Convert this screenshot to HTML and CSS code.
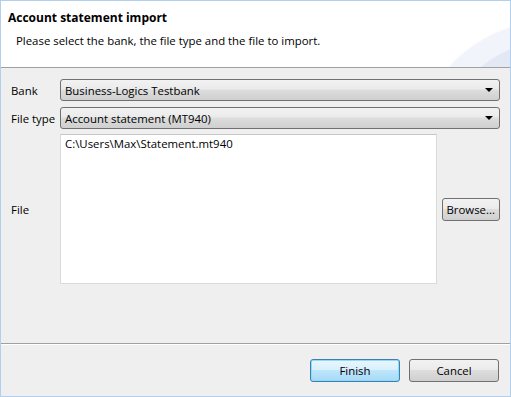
FILE: index.html
```html
<!DOCTYPE html>
<html lang="en">
<head>
    <meta charset="UTF-8">
    <title>Account statement import</title>
    <link rel="stylesheet" href="styles.css">
</head>
<body>
    <div class="window">
        <div class="banner">
            <div class="banner-title">Account statement import</div>
            <div class="banner-text">Please select the bank, the file type and the file to import.</div>
        </div>

        <div class="form">
            <label class="lbl">Bank</label>
            <div class="combo span2">
                <span>Business-Logics Testbank</span>
                <span class="arrow"></span>
            </div>

            <label class="lbl">File type</label>
            <div class="combo span2">
                <span>Account statement (MT940)</span>
                <span class="arrow"></span>
            </div>

            <label class="lbl">File</label>
            <div class="filebox">C:\Users\Max\Statement.mt940</div>
            <button class="btn">Browse...</button>
        </div>

        <div class="footer">
            <button class="btn btn-wide btn-default">Finish</button>
            <button class="btn btn-wide">Cancel</button>
        </div>
    </div>
</body>
</html>
```

FILE: styles.css
```css
body {
    margin: 0;
    font-family: "Open Sans", "Liberation Sans", sans-serif;
    font-size: 11.4px;
    color: #000;
}

.window {
    width: 511px;
    height: 397px;
    box-sizing: border-box;
    border: 1px solid #b3cfee;
    background: #efefef;
    display: flex;
    flex-direction: column;
}

.banner {
    height: 67px;
    flex-shrink: 0;
    box-sizing: border-box;
    padding: 8px 0 0 7px;
    background: radial-gradient(ellipse 190px 130px at 570px 115px, #e3e8f5 60%, transparent 61%),
                radial-gradient(ellipse 240px 180px at 570px 125px, #f2f4fb 60%, transparent 61%),
                #fff;
    border-bottom: 1px solid #a0a0a0;
}

.banner-title {
    font-weight: bold;
    font-size: 12px;
    line-height: 18px;
}

.banner-text {
    padding: 6px 0 0 8px;
    line-height: 16px;
}

.form {
    display: grid;
    grid-template-columns: 44px 377px 58px;
    column-gap: 5px;
    row-gap: 6px;
    padding: 11px 0 0 10px;
    align-items: center;
    flex: 1;
    align-content: start;
}

.lbl {
    white-space: nowrap;
}

.span2 {
    grid-column: span 2;
}

.combo {
    height: 22px;
    box-sizing: border-box;
    border: 1px solid #707070;
    border-radius: 3px;
    background: linear-gradient(#f2f2f2 0%, #ebebeb 45%, #dddddd 50%, #cfcfcf 100%);
    display: flex;
    align-items: center;
    justify-content: space-between;
    padding: 0 6px 0 4px;
}

.arrow {
    width: 0;
    height: 0;
    border-left: 4px solid transparent;
    border-right: 4px solid transparent;
    border-top: 4px solid #000;
}

.filebox {
    height: 150px;
    box-sizing: border-box;
    background: #fff;
    border: 1px solid #dadada;
    border-top-color: #c6c6c6;
    padding: 1px 0 0 4px;
    margin-top: -1px;
    line-height: 16px;
}

.btn {
    font-family: inherit;
    font-size: 11.4px;
    color: #000;
    height: 23px;
    padding: 0 4px;
    border: 1px solid #707070;
    border-radius: 3px;
    background: linear-gradient(#f2f2f2 0%, #ebebeb 45%, #dddddd 50%, #cfcfcf 100%);
    justify-self: end;
}

.footer {
    border-top: 1px solid #a0a0a0;
    height: 52px;
    flex-shrink: 0;
    display: flex;
    justify-content: flex-end;
    align-items: center;
    gap: 9px;
    padding-right: 11px;
    box-shadow: inset 0 1px 0 #fff;
}

.btn-wide {
    width: 90px;
}

.btn-default {
    border-color: #3c7fb1;
    background: linear-gradient(#eaf6fd 0%, #d9f0fc 45%, #bee6fd 50%, #a7d9f5 100%);
    box-shadow: inset 0 0 0 1px #8fdcf8;
}
```
